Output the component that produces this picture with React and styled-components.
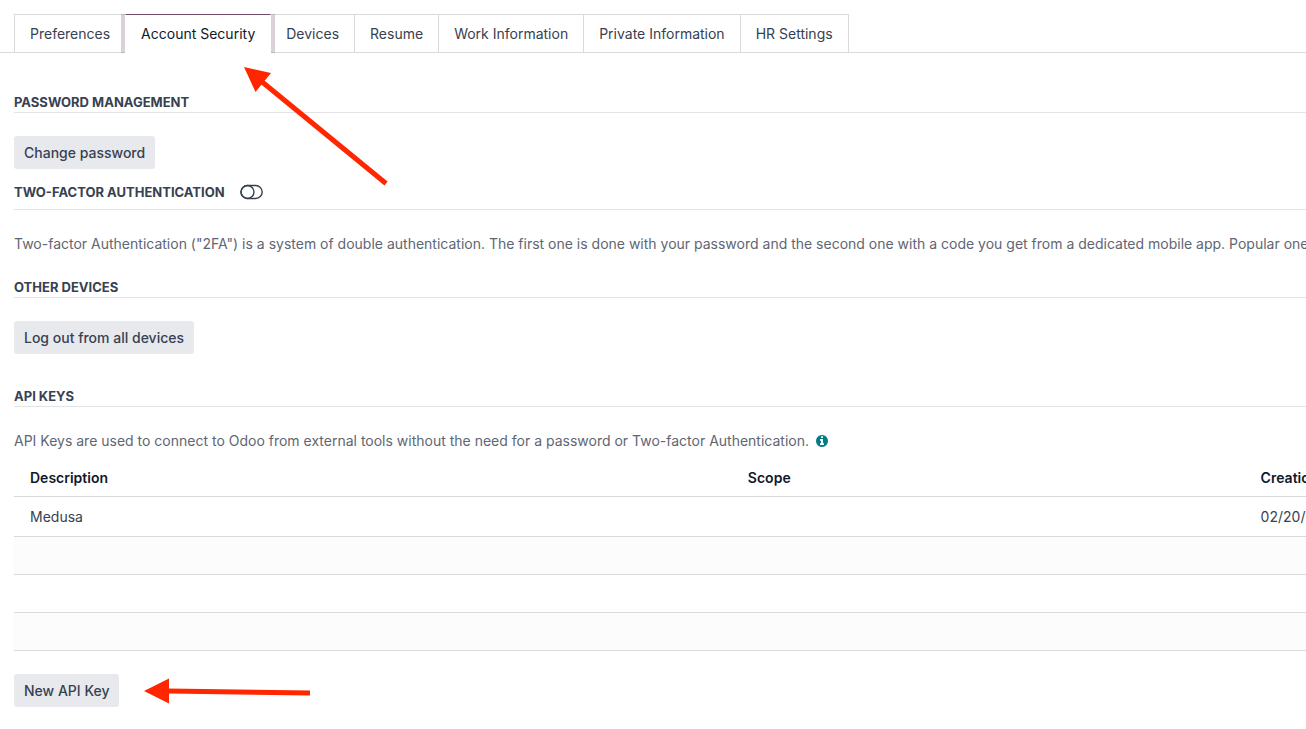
import React, { useState } from 'react';
import styled, { createGlobalStyle } from 'styled-components';

const GlobalStyle = createGlobalStyle`
  * {
    box-sizing: border-box;
  }
  body {
    margin: 0;
    background-color: #fff;
    color: #374151;
    font-family: Inter, sans-serif;
    font-size: 14px;
    line-height: 21px;
    overflow-x: hidden;
  }
`;

const Page = styled.main`
  position: relative;
  padding-top: 14px;
  overflow: hidden;
`;

const TabList = styled.div`
  display: flex;
  padding: 0 14px;
  border-bottom: 1px solid #d8dadd;
`;

const Tab = styled.button`
  height: 39px;
  margin: 0 -1px -1px 0;
  padding: 0 15px;
  border: 1px solid #d8dadd;
  background-color: #fff;
  color: #374151;
  font: inherit;
  white-space: nowrap;
  cursor: pointer;
  &[aria-selected='true'] {
    position: relative;
    border-color: #714b67 #fff #fff;
    color: #111827;
    box-shadow: -4px 0 0 rgba(113, 75, 103, 0.25), 4px 0 0 rgba(113, 75, 103, 0.25);
  }
`;

const Content = styled.div`
  padding: 39px 0 22px 14px;
`;

const Section = styled.section`
  margin-bottom: ${(props) => props.$gap}px;
`;

const Heading = styled.h2`
  display: flex;
  align-items: center;
  gap: 15px;
  height: ${(props) => (props.$tall ? 36 : 21)}px;
  margin: 0 0 23px;
  border-bottom: 1px solid #e1e3e6;
  font-size: 13px;
  font-weight: 700;
  line-height: 20px;
  text-transform: uppercase;
`;

const ToggleButton = styled.button`
  display: flex;
  padding: 0;
  border: none;
  background: none;
  color: #374151;
  cursor: pointer;
`;

const Button = styled.button`
  height: 33px;
  padding: 0 10px;
  border: none;
  border-radius: 3px;
  background-color: #e7e9ed;
  color: #374151;
  font: inherit;
  font-weight: 500;
  cursor: pointer;
  &:hover {
    background-color: #d8dadd;
  }
`;

const Text = styled.p`
  display: flex;
  align-items: center;
  gap: 7px;
  margin: 0;
  color: #5f6673;
  white-space: nowrap;
`;

const InfoIcon = styled.svg`
  width: 12px;
  height: 12px;
  fill: #017e84;
`;

const KeyTable = styled.table`
  width: 127%;
  margin: 8px 0 23px;
  border-collapse: collapse;
  table-layout: fixed;
  th,
  td {
    height: 38px;
    padding: 0 16px;
    border-bottom: 1px solid #d8dadd;
    text-align: left;
  }
  th {
    height: 37px;
    color: #111827;
    font-weight: 600;
  }
`;

const Column = styled.col`
  width: ${(props) => props.$share}%;
`;

const KeyRow = styled.tr`
  td {
    height: 40px;
  }
`;

const EmptyRow = styled.tr`
  &:nth-child(even) {
    background-color: #fcfcfc;
  }
`;

const Actions = styled.div`
  display: flex;
  align-items: center;
  gap: 25px;
`;

const TabArrow = styled.svg`
  position: absolute;
  top: 66px;
  left: 243px;
  pointer-events: none;
`;

const tabs = [
  'Preferences',
  'Account Security',
  'Devices',
  'Resume',
  'Work Information',
  'Private Information',
  'HR Settings',
];

const keys = [{ description: 'Medusa', scope: '', created: '02/20/2025' }];

const ToggleOff = () => (
  <svg width="23" height="16" viewBox="0 0 23 16" fill="none" stroke="currentColor" strokeWidth="1.4" aria-hidden="true">
    <rect x="1" y="1.5" width="21.2" height="13" rx="6.5" />
    <circle cx="7.5" cy="8" r="6.5" />
  </svg>
);

const Info = () => (
  <InfoIcon viewBox="0 128 1536 1536" aria-hidden="true">
    <path d="M1024 1376v-160q0-14-9-23t-23-9h-96v-512q0-14-9-23t-23-9h-320q-14 0-23 9t-9 23v160q0 14 9 23t23 9h96v320h-96q-14 0-23 9t-9 23v160q0 14 9 23t23 9h448q14 0 23-9t9-23zm-128-896v-160q0-14-9-23t-23-9h-192q-14 0-23 9t-9 23v160q0 14 9 23t23 9h192q14 0 23-9t9-23zm640 416q0 209-103 385.5t-279.5 279.5-385.5 103-385.5-103-279.5-279.5-103-385.5 103-385.5 279.5-279.5 385.5-103 385.5 103 279.5 279.5 103 385.5z" />
  </InfoIcon>
);

const App = () => {
  const [active, setActive] = useState('Account Security');
  const [twoFactor, setTwoFactor] = useState(false);

  return (
    <Page>
      <GlobalStyle />
      <TabList role="tablist">
        {tabs.map((tab) => (
          <Tab key={tab} role="tab" aria-selected={tab === active} onClick={() => setActive(tab)}>
            {tab}
          </Tab>
        ))}
      </TabList>
      <Content>
        <Section $gap={5}>
          <Heading>Password Management</Heading>
          <Button>Change password</Button>
        </Section>
        <Section $gap={23}>
          <Heading $tall>
            Two-factor Authentication
            <ToggleButton
              role="switch"
              aria-checked={twoFactor}
              aria-label="Two-factor Authentication"
              onClick={() => setTwoFactor(!twoFactor)}
            >
              <ToggleOff />
            </ToggleButton>
          </Heading>
          <Text>
            Two-factor Authentication ("2FA") is a system of double authentication. The first one is done with your
            password and the second one with a code you get from a dedicated mobile app. Popular ones include Authy,
            Google Authenticator or the Microsoft Authenticator.
          </Text>
        </Section>
        <Section $gap={32}>
          <Heading>Other Devices</Heading>
          <Button>Log out from all devices</Button>
        </Section>
        <Section $gap={0}>
          <Heading>API Keys</Heading>
          <Text>
            API Keys are used to connect to Odoo from external tools without the need for a password or Two-factor
            Authentication.
            <Info />
          </Text>
          <KeyTable>
            <colgroup>
              <Column $share={43.75} />
              <Column $share={31.25} />
              <Column $share={25} />
            </colgroup>
            <thead>
              <tr>
                <th>Description</th>
                <th>Scope</th>
                <th>Creation Date</th>
              </tr>
            </thead>
            <tbody>
              {keys.map((key) => (
                <KeyRow key={key.description}>
                  <td>{key.description}</td>
                  <td>{key.scope}</td>
                  <td>{key.created}</td>
                </KeyRow>
              ))}
              {[1, 2, 3].map((n) => (
                <EmptyRow key={n}>
                  <td colSpan={3} />
                </EmptyRow>
              ))}
            </tbody>
          </KeyTable>
          <Actions>
            <Button>New API Key</Button>
            <svg width="166" height="28" viewBox="0 0 166 28" aria-hidden="true">
              <path d="M24 15 L166 17" stroke="#ff2600" strokeWidth="5" />
              <path d="M0 15 L25 2.5 V27.5 Z" fill="#ff2600" />
            </svg>
          </Actions>
        </Section>
      </Content>
      <TabArrow width="148" height="122" viewBox="0 0 148 122" aria-hidden="true">
        <path d="M18 15 L143 117.5" stroke="#ff2600" strokeWidth="5" />
        <path d="M1 1 L28 7 L12.5 26 Z" fill="#ff2600" />
      </TabArrow>
    </Page>
  );
};

export default App;
